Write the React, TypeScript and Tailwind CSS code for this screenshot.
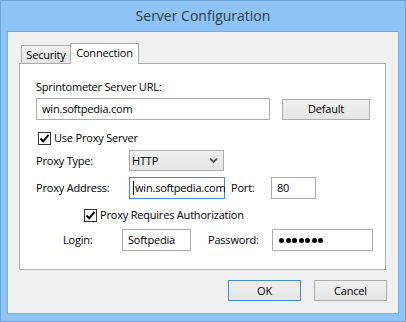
const font = { fontFamily: '"Open Sans", "Noto Sans", Arial, sans-serif' };

function Check() {
  return (
    <span className="w-[13px] h-[13px] border border-[#333] bg-white flex items-center justify-center shrink-0">
      <svg width="11" height="11" viewBox="0 0 11 11">
        <path d="M1.5 5.5 L4.2 8.3 L9.5 1.8" fill="none" stroke="#000" strokeWidth="2" />
      </svg>
    </span>
  );
}

function Input({ value, w, focused = false }: { value: string; w: string; focused?: boolean }) {
  return (
    <div
      className={`${w} h-[22px] bg-white border flex items-center pl-[5px] relative ${
        focused ? 'border-[#3c8fe0]' : 'border-[#acacac]'
      }`}
    >
      {focused && <span className="absolute left-[3px] top-[3px] w-px h-[14px] bg-black" />}
      <span className="whitespace-nowrap">{value}</span>
    </div>
  );
}

function Button({ label, w, primary = false }: { label: string; w: string; primary?: boolean }) {
  return (
    <div
      className={`${w} h-[21px] flex items-center justify-center border bg-gradient-to-b from-[#f0f0f0] to-[#e5e5e5] ${
        primary ? 'border-[#3c8fe0]' : 'border-[#acacac]'
      }`}
    >
      {label}
    </div>
  );
}

export default function App() {
  return (
    <div
      className="w-[406px] h-[322px] bg-[#8dc4f5] border border-[#6fa3d6] flex flex-col text-[11px] tracking-[-0.2px] text-black leading-[16px]"
      style={font}
    >
      <div className="h-[30px] flex items-center justify-center text-[14px] tracking-normal text-[#2c3a48]">
        Server Configuration
      </div>

      <div className="mx-[6px] h-[283px] border border-[#79aee3] bg-[#f0f0f0] flex flex-col">
        <div className="pl-[11px] pt-[10px]">
          <div className="flex items-end h-[21px] pl-[2px] relative z-10">
            <div className="w-[50px] h-[18px] border border-b-0 border-[#acacac] bg-gradient-to-b from-[#f0f0f0] to-[#e5e5e5] flex items-center justify-center">
              Security
            </div>
            <div className="w-[69px] h-[21px] -ml-px -mb-px border border-b-0 border-[#acacac] bg-white flex items-start justify-center pt-[1px]">
              Connection
            </div>
          </div>

          <div className="w-[367px] h-[207px] border border-[#acacac] bg-white pl-[16px] flex flex-col">
            <div className="mt-[15px]">Sprintometer Server URL:</div>

            <div className="mt-[3px] flex items-center">
              <Input value="win.softpedia.com" w="w-[234px]" />
              <div className="ml-[12px]">
                <Button label="Default" w="w-[88px]" />
              </div>
            </div>

            <div className="mt-[10px] flex items-center gap-[3px] pl-[2px]">
              <Check />
              <span>Use Proxy Server</span>
            </div>

            <div className="mt-[4px] flex items-center">
              <span className="w-[93px]">Proxy Type:</span>
              <div className="w-[95px] h-[21px] border border-[#acacac] bg-gradient-to-b from-[#f0f0f0] to-[#e5e5e5] flex items-center justify-between pl-[2px] pr-[5px]">
                <span>HTTP</span>
                <svg width="9" height="7" viewBox="0 0 9 7">
                  <path d="M1 1.5 L4.5 5 L8 1.5" fill="none" stroke="#555" strokeWidth="1.8" />
                </svg>
              </div>
            </div>

            <div className="mt-[6px] flex items-center">
              <span className="w-[93px]">Proxy Address:</span>
              <Input value="win.softpedia.com" w="w-[96px]" focused />
              <span className="ml-[6px] w-[40px]">Port:</span>
              <Input value="80" w="w-[45px]" />
            </div>

            <div className="mt-[8px] flex items-center gap-[3px] pl-[48px]">
              <Check />
              <span>Proxy Requires Authorization</span>
            </div>

            <div className="mt-[6px] flex items-center">
              <span className="ml-[27px] w-[59px]">Login:</span>
              <Input value="Softpedia" w="w-[69px]" />
              <span className="ml-[17px] w-[64px]">Password:</span>
              <div className="w-[101px] h-[22px] bg-white border border-[#acacac] flex items-center gap-[1.5px] pl-[6px]">
                {Array.from({ length: 7 }).map((_, i) => (
                  <span key={i} className="w-[5px] h-[5px] rounded-full bg-black" />
                ))}
              </div>
            </div>
          </div>
        </div>

        <div className="mt-[10px] flex justify-end gap-[13px] pr-[11px]">
          <Button label="OK" w="w-[73px]" primary />
          <Button label="Cancel" w="w-[73px]" />
        </div>
      </div>
    </div>
  );
}
